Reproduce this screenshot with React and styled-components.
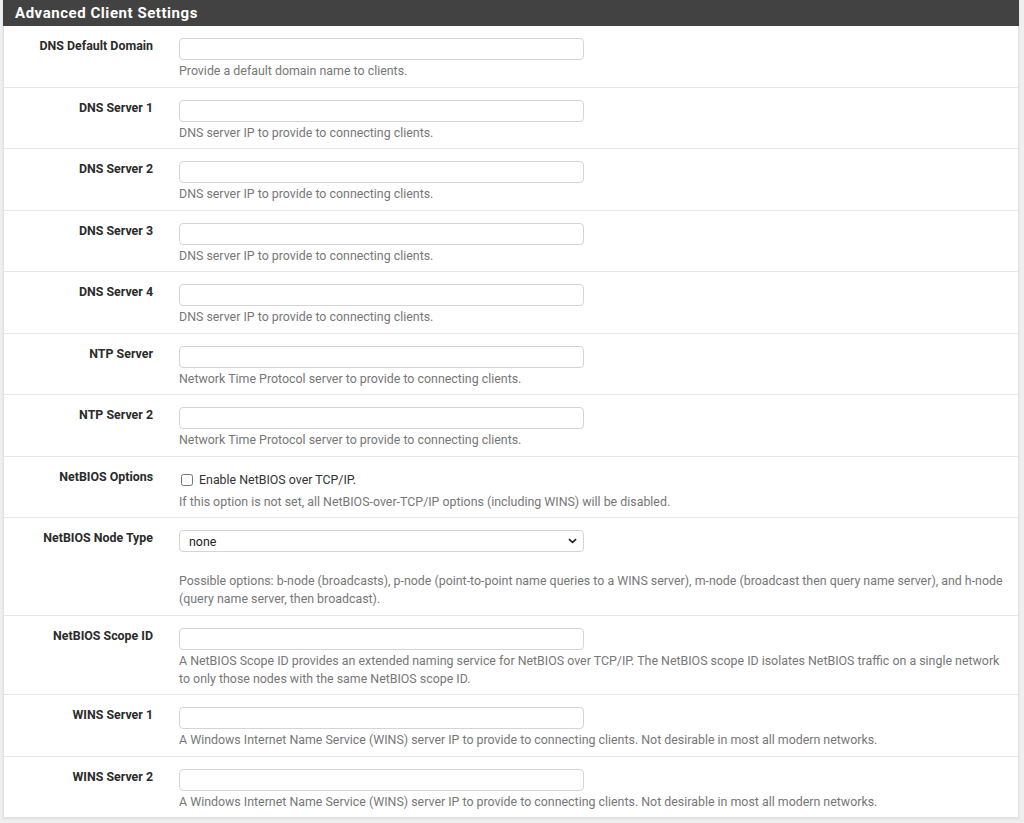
import styled, { createGlobalStyle } from 'styled-components';

const GlobalStyle = createGlobalStyle`
  html, body {
    margin: 0;
    padding: 0;
    background: #efefef;
  }
  body {
    font-family: Roboto, "Liberation Sans", Arial, sans-serif;
    color: #333;
  }
`;

const fields = [
  { label: 'DNS Default Domain', help: 'Provide a default domain name to clients.' },
  { label: 'DNS Server 1', help: 'DNS server IP to provide to connecting clients.' },
  { label: 'DNS Server 2', help: 'DNS server IP to provide to connecting clients.' },
  { label: 'DNS Server 3', help: 'DNS server IP to provide to connecting clients.' },
  { label: 'DNS Server 4', help: 'DNS server IP to provide to connecting clients.' },
  { label: 'NTP Server', help: 'Network Time Protocol server to provide to connecting clients.' },
  { label: 'NTP Server 2', help: 'Network Time Protocol server to provide to connecting clients.' },
];

const winsHelp =
  'A Windows Internet Name Service (WINS) server IP to provide to connecting clients. Not desirable in most all modern networks.';

export default function App() {
  return (
    <Page>
      <GlobalStyle />
      <Panel>
        <PanelHeading>Advanced Client Settings</PanelHeading>

        {fields.map((f) => (
          <Row key={f.label}>
            <Label>{f.label}</Label>
            <Field>
              <TextInput type="text" />
              <Help>{f.help}</Help>
            </Field>
          </Row>
        ))}

        <Row>
          <Label>NetBIOS Options</Label>
          <Field>
            <CheckLine>
              <Check type="checkbox" />
              Enable NetBIOS over TCP/IP.
            </CheckLine>
            <Help>
              If this option is not set, all NetBIOS-over-TCP/IP options (including WINS) will be
              disabled.
            </Help>
          </Field>
        </Row>

        <Row>
          <Label>NetBIOS Node Type</Label>
          <Field>
            <SelectWrap>
              <Select defaultValue="none">
                <option value="none">none</option>
                <option value="b">b-node</option>
                <option value="p">p-node</option>
                <option value="m">m-node</option>
                <option value="h">h-node</option>
              </Select>
              <Chevron viewBox="0 0 10 6" aria-hidden="true">
                <path d="M1 1l4 3.6L9 1" fill="none" stroke="#222" strokeWidth="1.8" />
              </Chevron>
            </SelectWrap>
            <Help $spaced>
              Possible options: b-node (broadcasts), p-node (point-to-point name queries to a WINS
              server), m-node (broadcast then query name server), and h-node (query name server,
              then broadcast).
            </Help>
          </Field>
        </Row>

        <Row>
          <Label>NetBIOS Scope ID</Label>
          <Field>
            <TextInput type="text" />
            <Help>
              A NetBIOS Scope ID provides an extended naming service for NetBIOS over TCP/IP. The
              NetBIOS scope ID isolates NetBIOS traffic on a single network to only those nodes
              with the same NetBIOS scope ID.
            </Help>
          </Field>
        </Row>

        <Row>
          <Label>WINS Server 1</Label>
          <Field>
            <TextInput type="text" />
            <Help>{winsHelp}</Help>
          </Field>
        </Row>

        <Row $last>
          <Label>WINS Server 2</Label>
          <Field>
            <TextInput type="text" />
            <Help>{winsHelp}</Help>
          </Field>
        </Row>
      </Panel>
    </Page>
  );
}

const Page = styled.div`
  padding: 0 5px 5px 3px;
`;

const Panel = styled.div`
  background: #fff;
  border: 1px solid #e2e2e2;
  border-top: none;
  box-shadow: 0 1px 2px rgba(0, 0, 0, 0.08);
`;

const PanelHeading = styled.div`
  height: 26px;
  background: #424242;
  color: #fff;
  font-size: 15px;
  font-weight: 700;
  letter-spacing: 0.55px;
  display: flex;
  align-items: center;
  padding-left: 12px;
  margin: 0 -1px;
`;

const Row = styled.div`
  display: flex;
  padding: 12px 9px 6.5px 0;
  border-bottom: ${(p) => (p.$last ? 'none' : '1px solid #e6e6e6')};
`;

const Label = styled.div`
  width: 149px;
  flex: none;
  text-align: right;
  font-size: 12.4px;
  font-weight: 700;
  color: #2b2b2b;
  padding-top: 1px;
  line-height: 14px;
`;

const Field = styled.div`
  flex: 1;
  margin-left: 26px;
  display: flex;
  flex-direction: column;
`;

const TextInput = styled.input`
  box-sizing: border-box;
  width: 405px;
  height: 22px;
  border: 1px solid #d4d4d4;
  border-radius: 4px;
  padding: 0 8px;
  font-family: inherit;
  font-size: 12px;
  outline: none;
`;

const SelectWrap = styled.div`
  position: relative;
  width: 405px;
`;

const Select = styled.select`
  box-sizing: border-box;
  width: 405px;
  height: 22px;
  border: 1px solid #d4d4d4;
  border-radius: 4px;
  padding: 0 9px;
  font-family: inherit;
  font-size: 12.4px;
  color: #222;
  background: #fff;
  appearance: none;
  outline: none;
`;

const Chevron = styled.svg`
  position: absolute;
  right: 7px;
  top: 8px;
  width: 9px;
  height: 6px;
  pointer-events: none;
`;

const CheckLine = styled.label`
  display: flex;
  align-items: center;
  height: 22px;
  font-size: 12.4px;
  color: #333;
`;

const Check = styled.input`
  width: 12px;
  height: 12px;
  margin: 0 6px 0 2px;
`;

const Help = styled.div`
  margin-top: ${(p) => (p.$spaced ? '20px' : '2px')};
  font-size: 12.4px;
  line-height: 18px;
  color: #777;
`;
